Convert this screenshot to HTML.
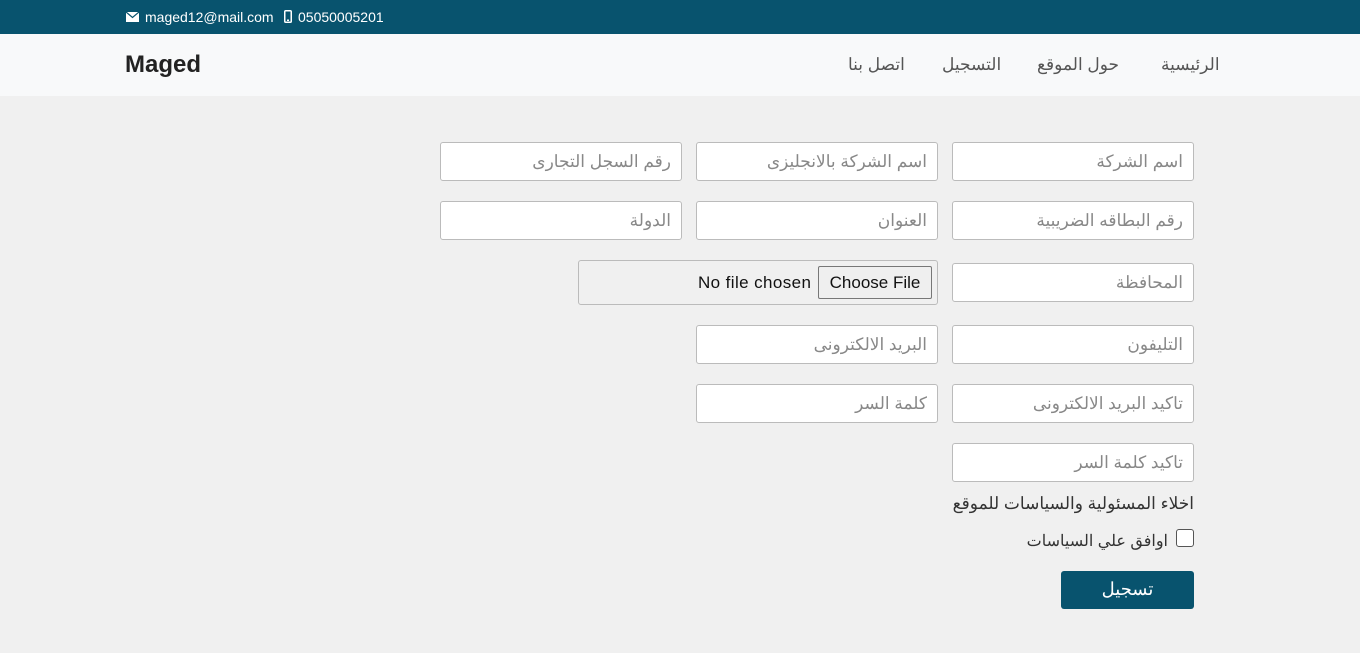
<!DOCTYPE html>
<html><head><meta charset="utf-8"><style>
*{box-sizing:border-box;margin:0;padding:0}
body{width:1360px;height:653px;background:#f0f0f0;font-family:"Liberation Sans","Noto Sans CJK SC",sans-serif;position:relative;overflow:hidden}
.top{position:absolute;left:0;top:0;width:1360px;height:34px;background:#08536e;color:#fff;font-size:14px}
.top span{position:absolute;top:9px}
.nav{position:absolute;left:0;top:34px;width:1360px;height:62px;background:#f8f9fa}
.logo{position:absolute;left:125px;top:51px;font-size:24px;font-weight:bold;color:#222}
.nl{position:absolute;top:55px;font-size:17px;color:#555}
.in{position:absolute;width:242px;height:39px;background:#fff;border:1px solid #bbb;border-radius:3px;direction:rtl;padding-right:10px;font-size:17px;color:#888;line-height:37px;font-family:"Liberation Sans","Noto Sans CJK SC",sans-serif}
.t{position:absolute;direction:rtl;font-size:16px;color:#333}
</style></head><body>
<div class="top">
<svg style="position:absolute;left:126px;top:12px" width="13" height="10" viewBox="0 0 13 10"><rect width="13" height="10" fill="#fff"/><path d="M0 0L6.5 5.5L13 0" stroke="#08536e" stroke-width="1.2" fill="none"/></svg>
<span style="left:145px">maged12@mail.com</span>
<svg style="position:absolute;left:284px;top:10px" width="8" height="13" viewBox="0 0 8 13"><rect x="0.75" y="0.75" width="6.5" height="11.5" rx="1" fill="none" stroke="#fff" stroke-width="1.5"/><rect x="3" y="9.5" width="2" height="1.5" fill="#fff"/></svg>
<span style="left:298px">05050005201</span>
</div>
<div class="nav"></div>
<div class="logo">Maged</div>
<div class="nl" style="left:1161px">الرئيسية</div>
<div class="nl" style="left:1037px">حول الموقع</div>
<div class="nl" style="left:942px">التسجيل</div>
<div class="nl" style="left:848px">اتصل بنا</div>

<div class="in" style="left:952px;top:142px">اسم الشركة</div>
<div class="in" style="left:696px;top:142px">اسم الشركة بالانجليزى</div>
<div class="in" style="left:440px;top:142px">رقم السجل التجارى</div>
<div class="in" style="left:952px;top:201px">رقم البطاقه الضريبية</div>
<div class="in" style="left:696px;top:201px">العنوان</div>
<div class="in" style="left:440px;top:201px">الدولة</div>
<div class="in" style="left:952px;top:263px">المحافظة</div>
<div style="position:absolute;left:578px;top:260px;width:360px;height:45px;border:1px solid #bbb;border-radius:3px;background:#f0f0f0"></div>
<div style="position:absolute;left:698px;top:273px;font-size:17px;color:#111;width:116px;letter-spacing:0.4px">No file chosen</div>
<div style="position:absolute;left:818px;top:266px;width:114px;height:33px;border:1px solid #777;border-radius:2px;background:#efefef;font-size:17px;color:#111;text-align:center;line-height:31px">Choose File</div>
<div class="in" style="left:952px;top:325px">التليفون</div>
<div class="in" style="left:696px;top:325px">البريد الالكترونى</div>
<div class="in" style="left:952px;top:384px">تاكيد البريد الالكترونى</div>
<div class="in" style="left:696px;top:384px">كلمة السر</div>
<div class="in" style="left:952px;top:443px">تاكيد كلمة السر</div>
<div class="t" style="right:166px;top:494px;font-size:17px">اخلاء المسئولية والسياسات للموقع</div>
<div style="position:absolute;left:1176px;top:529px;width:18px;height:18px;border:1px solid #555;border-radius:3px;background:#fff"></div>
<div class="t" style="right:192px;top:531px">اوافق علي السياسات</div>
<div style="position:absolute;left:1061px;top:571px;width:133px;height:38px;background:#08536e;border-radius:3px;color:#fff;font-size:18px;text-align:center;line-height:37px">تسجيل</div>
</body></html>
